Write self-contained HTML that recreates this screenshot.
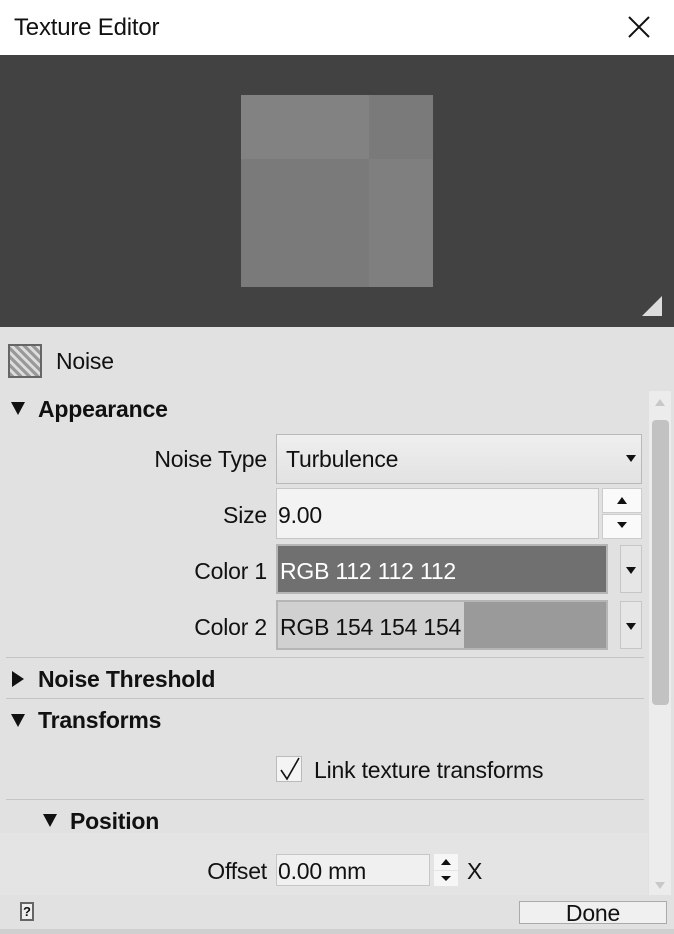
<!DOCTYPE html>
<html><head><style>
*{box-sizing:border-box;margin:0;padding:0}
body{width:674px;height:934px;overflow:hidden;background:#e1e1e1;font-family:"Liberation Sans",sans-serif;color:#111;position:relative}
.a{position:absolute}
.t{font-size:23px;letter-spacing:-0.2px;white-space:nowrap}
.b{font-weight:bold;font-size:23px}
.tri{width:0;height:0;border-left:7px solid transparent;border-right:7px solid transparent;border-top:13px solid #111}
.trir{width:0;height:0;border-top:8px solid transparent;border-bottom:8px solid transparent;border-left:12px solid #111}
.sm{width:0;height:0;border-left:5px solid transparent;border-right:5px solid transparent}
.line{height:1px;background:#c4c4c4;left:6px;width:638px}
</style></head><body>
<div class="a" style="left:0;top:0;width:674px;height:55px;background:#fff"></div>
<div class="a t" style="left:14px;top:14px;font-size:24px">Texture Editor</div>
<svg class="a" style="left:628px;top:16px" width="22" height="22"><path d="M1 1L21 21M21 1L1 21" stroke="#111" stroke-width="2"/></svg>
<div class="a" style="left:0;top:55px;width:674px;height:272px;background:#424242"></div>
<div class="a" style="left:241px;top:95px;width:192px;height:192px;background:#7a7a7a"></div>
<div class="a" style="left:241px;top:95px;width:128px;height:64px;background:#828282"></div>
<div class="a" style="left:369px;top:159px;width:64px;height:128px;background:#7f7f7f"></div>
<svg class="a" style="left:642px;top:296px" width="20" height="20"><path d="M20 0V20H0Z" fill="#ddd"/></svg>
<div class="a" style="left:8px;top:344px;width:34px;height:34px;border:2px solid #666;background:repeating-linear-gradient(45deg,#999 0 3px,#ddd 3px 6px)"></div>
<div class="a t" style="left:56px;top:348px">Noise</div>
<div class="a tri" style="left:11px;top:402px"></div>
<div class="a t b" style="left:38px;top:396px">Appearance</div>
<div class="a t" style="left:0;width:267px;text-align:right;top:446px">Noise Type</div>
<div class="a" style="left:276px;top:434px;width:366px;height:50px;border:1px solid #b9b9b9;background:linear-gradient(#efefef,#e2e2e2)"></div>
<div class="a t" style="left:286px;top:446px">Turbulence</div>
<div class="a sm" style="left:626px;top:455px;border-top:7px solid #111"></div>
<div class="a t" style="left:0;width:267px;text-align:right;top:502px">Size</div>
<div class="a" style="left:276px;top:488px;width:323px;height:51px;border:1px solid #c6c6c6;background:#f3f3f3"></div>
<div class="a t" style="left:278px;top:502px">9.00</div>
<div class="a" style="left:602px;top:488px;width:40px;height:25px;border:1px solid #ccc;background:#fafafa"></div>
<div class="a" style="left:602px;top:514px;width:40px;height:25px;border:1px solid #ccc;background:#fafafa"></div>
<div class="a sm" style="left:617px;top:497px;border-bottom:7px solid #111"></div>
<div class="a sm" style="left:617px;top:522px;border-top:6px solid #111"></div>
<div class="a t" style="left:0;width:267px;text-align:right;top:558px">Color 1</div>
<div class="a" style="left:276px;top:544px;width:332px;height:50px;border:2px solid #b5b5b5;background:#707070"></div>
<div class="a t" style="left:280px;top:558px;color:#fff">RGB 112 112 112</div>
<div class="a" style="left:620px;top:545px;width:22px;height:48px;border:1px solid #c6c6c6;background:#e6e6e6"></div>
<div class="a sm" style="left:626px;top:567px;border-top:7px solid #111"></div>
<div class="a t" style="left:0;width:267px;text-align:right;top:614px">Color 2</div>
<div class="a" style="left:276px;top:600px;width:332px;height:50px;border:2px solid #b5b5b5;background:#9a9a9a"></div>
<div class="a" style="left:278px;top:602px;width:186px;height:46px;background:#d0d0d0"></div>
<div class="a t" style="left:280px;top:614px">RGB 154 154 154</div>
<div class="a" style="left:620px;top:601px;width:22px;height:48px;border:1px solid #c6c6c6;background:#e6e6e6"></div>
<div class="a sm" style="left:626px;top:623px;border-top:7px solid #111"></div>
<div class="a line" style="top:657px"></div>
<div class="a trir" style="left:12px;top:671px"></div>
<div class="a t b" style="left:38px;top:666px">Noise Threshold</div>
<div class="a line" style="top:698px"></div>
<div class="a tri" style="left:11px;top:714px"></div>
<div class="a t b" style="left:38px;top:707px">Transforms</div>
<div class="a" style="left:276px;top:756px;width:26px;height:26px;border:1px solid #bbb;background:#f4f4f4"></div>
<svg class="a" style="left:278px;top:756px" width="24" height="26"><path d="M3 14L9 23L21 2" stroke="#111" stroke-width="1.6" fill="none"/></svg>
<div class="a t" style="left:314px;top:757px">Link texture transforms</div>
<div class="a line" style="top:799px"></div>
<div class="a tri" style="left:43px;top:814px"></div>
<div class="a t b" style="left:70px;top:808px">Position</div>
<div class="a" style="left:0;top:833px;width:648px;height:62px;background:#e4e4e4"></div>
<div class="a t" style="left:0;width:267px;text-align:right;top:858px">Offset</div>
<div class="a" style="left:276px;top:854px;width:154px;height:32px;border:1px solid #c6c6c6;background:#f0f0f0"></div>
<div class="a t" style="left:278px;top:858px">0.00 mm</div>
<div class="a" style="left:434px;top:854px;width:24px;height:16px;background:#f6f6f6"></div>
<div class="a" style="left:434px;top:871px;width:24px;height:15px;background:#f6f6f6"></div>
<div class="a sm" style="left:441px;top:859px;border-bottom:6px solid #111"></div>
<div class="a sm" style="left:441px;top:876px;border-top:5px solid #111"></div>
<div class="a t" style="left:467px;top:858px">X</div>
<div class="a" style="left:649px;top:391px;width:22px;height:504px;background:#ececec"></div>
<div class="a" style="left:652px;top:420px;width:17px;height:285px;background:#c2c2c2;border-radius:4px"></div>
<div class="a sm" style="left:655px;top:399px;border-bottom:7px solid #c8c8c8"></div>
<div class="a sm" style="left:655px;top:882px;border-top:7px solid #c8c8c8"></div>
<div class="a" style="left:20px;top:902px;width:14px;height:19px;border:2px solid #666;background:#f0f0f0;font-size:13px;font-weight:bold;text-align:center;line-height:15px">?</div>
<div class="a" style="left:519px;top:901px;width:148px;height:23px;border:1px solid #aaa;background:#f0f0f0"></div>
<div class="a t" style="left:519px;width:148px;text-align:center;top:900px">Done</div>
<div class="a" style="left:0;top:929px;width:674px;height:5px;background:#cfcfcf"></div>
</body></html>
